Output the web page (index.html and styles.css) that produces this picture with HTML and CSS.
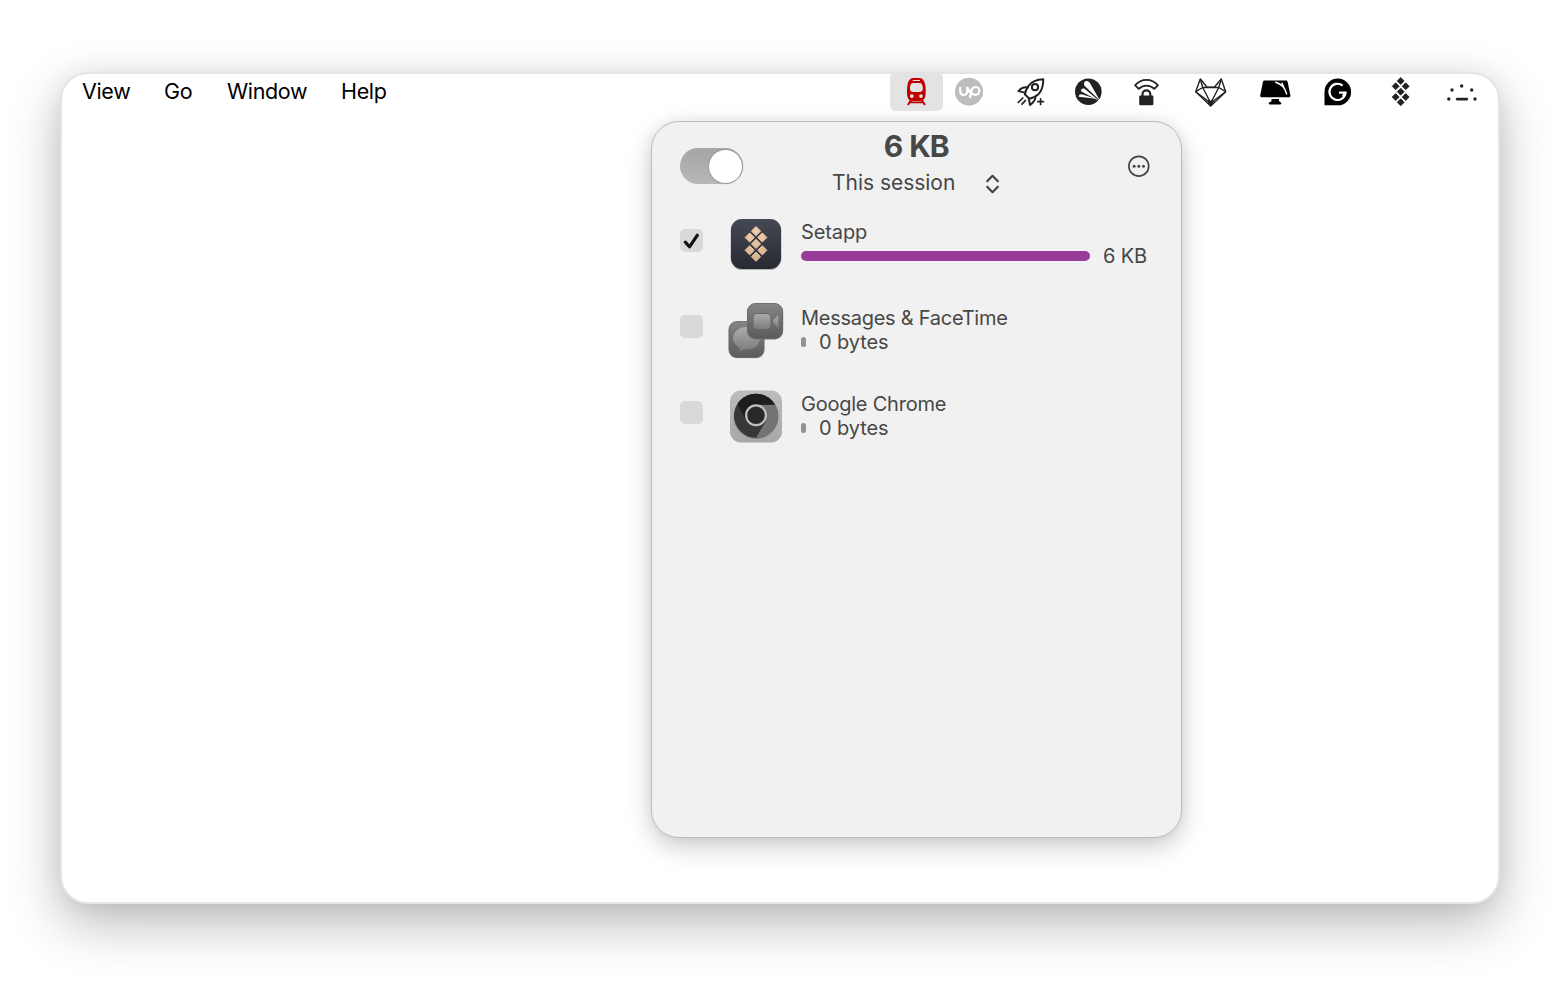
FILE: index.html
```html
<!DOCTYPE html>
<html lang="en">
<head>
<meta charset="utf-8">
<title>Menu bar</title>
<link rel="stylesheet" href="styles.css">
</head>
<body>
<main class="window">
  <header class="menubar">
    <nav class="menus">
      <span class="menu menu-view">View</span>
      <span class="menu menu-go">Go</span>
      <span class="menu menu-window">Window</span>
      <span class="menu menu-help">Help</span>
    </nav>
    <div class="tray">
      <div class="tray-active">
        <svg width="53" height="39" viewBox="0 0 53 39">
          <path fill="#c00000" fill-rule="evenodd" d="M23.500 6h5.800c3.700 0 5.400 3.200 6 7.500.5 3.200.5 6.500.2 9.500-.3 3.400-2 6-5 6h-8.300c-3 0-4.700-2.600-5-6-.3-3-.3-6.300.2-9.500.6-4.300 2.400-7.500 6.100-7.500zM22.800 7.900v1.100h7.200V7.900zM23 11c-1.900 0-2.800 2-3 4.600-.2 2.900.7 4.300 2.600 4.300h7.600c1.900 0 2.800-1.400 2.600-4.300-.2-2.600-1.100-4.600-3-4.600zM21.800 22.200a1.900 1.900 0 1 0 0 3.800 1.900 1.900 0 0 0 0-3.800zM31 22.200a1.900 1.900 0 1 0 0 3.800 1.900 1.900 0 0 0 0-3.800z"/>
          <path d="M21 28l-3.100 5M31.800 28l3.100 5M19.500 30.400h13.800" stroke="#c00000" stroke-width="1.900" fill="none"/>
        </svg>
      </div>
      <svg class="tray-up" width="28" height="40" viewBox="0 0 28 40">
        <circle cx="14" cy="19.700" r="14" fill="#bdbdbd"/>
        <path d="M5.200 15v4.500a3.500 3.500 0 0 0 7 0V15c1.200 3.300 2.600 5.500 4.300 7.100M14.900 26l1.600-7.600c.6-2.200 1.900-3.400 3.900-3.400a3.900 3.900 0 0 1 0 7.800c-2.700 0-4.700-2-6-4.100" fill="none" stroke="#fff" stroke-width="2.200"/>
      </svg>
      <svg class="tray-rocket" width="28" height="40" viewBox="0 0 28 40">
        <g fill="none" stroke="#222" stroke-width="2" stroke-linejoin="round" stroke-linecap="round">
          <path d="M26.300 7.300c-6.500.2-11.300 1.800-14.800 6.500-2 2.700-3.200 5.500-3.700 8.500l4.600 4.400c3.500-.8 6.600-2.200 9-4.500 3.700-3.600 4.900-8.400 4.900-14.900z"/>
          <circle cx="18" cy="15.200" r="3.100"/>
          <path d="M11 15.500c-3-.6-6.600.2-9.500 3.600l6.300 1.500M18.500 24.500c0 3.200-2 6-5.500 8.500l-1.200-6.500"/>
          <path d="M5.800 26L1.200 30.500M8.500 28.300l-3.500 3.800M20.800 29.700h5.600M23.600 26.900v5.600" stroke-width="1.700"/>
        </g>
      </svg>
      <svg class="tray-avast" width="27" height="40" viewBox="0 0 27 40">
        <circle cx="13.300" cy="19.700" r="13.300" fill="#222"/>
        <path fill="#fff" d="M9.300 13.600c-.9-2.500.4-4.500 2.400-4.500 1.600 0 2.600.9 3.500 2.500L25 28.700zM6 19.200c-.3-2.200 1.900-3.300 3.900-2.200l14.300 12zM3.700 24.800c0-1.900 1.300-2.700 3-2.500l14.200 4.500z"/>
        <path fill="#fff" d="M24 27l3 1-3 5-1-3z"/>
      </svg>
      <svg class="tray-lock" width="25" height="40" viewBox="0 0 25 40">
        <path d="M1 13.200c6.500-7.200 16.500-7.200 23 0l-3.700 3.700c-4.300-4.500-11.300-4.500-15.600 0z" fill="none" stroke="#222" stroke-width="1.700" stroke-linejoin="round"/>
        <path d="M8.500 24.500v-2.300a3.900 3.900 0 0 1 7.800 0v2.300" fill="none" stroke="#222" stroke-width="2.200"/>
        <rect x="5.200" y="23.600" width="14.200" height="9.600" rx="1.300" fill="#222"/>
      </svg>
      <svg class="tray-fox" width="32" height="40" viewBox="0 0 32 40">
        <g fill="none" stroke="#222" stroke-width="1.400" stroke-linejoin="round">
          <path d="M5.300 7L.7 19.700 15.700 34l15-14.300L26.300 7l-7 8.300h-7.200z"/>
          <path d="M5.300 7l2.400 8.500h16.100L26.300 7M.7 19.700l7-4.200L15.700 31l8.100-15.500 6.900 4.200M.7 19.700L15.700 31l15-11.300"/>
        </g>
        <path d="M12.500 28.500h6.400l-.5 3.300-2.700 2.700-2.700-2.700z" fill="#222"/>
      </svg>
      <svg class="tray-monitor" width="31" height="40" viewBox="0 0 31 40">
        <path d="M4.700 8.500h21.200c1 0 1.600.6 1.800 1.500l2.700 13.400c.2 1.100-.4 1.900-1.500 1.900H1.700c-1.100 0-1.700-.8-1.500-1.900L2.900 10c.2-.9.800-1.500 1.800-1.500zM11.500 27h7.500v2c0 1 2.300 1 2.300 2.300 0 .7-.3 1.200-1 1.200H9.800c-.7 0-1.100-.5-1.100-1.200 0-1.300 2.800-1.300 2.800-2.300z"/>
        <path d="M15.600 10.300c5 1.500 9.300 4.300 11 11.500M22 11.200l1.800 4.200" fill="none" stroke="#fff" stroke-width="1.500" stroke-linecap="round"/>
      </svg>
      <svg class="tray-g" width="28" height="40" viewBox="0 0 28 40">
        <path d="M13.700 6.500a13.400 13.400 0 0 1 0 26.800H.5V19.900A13.300 13.300 0 0 1 13.700 6.500z"/>
        <path d="M18.700 13.600a8.100 8.100 0 1 0 2.900 7.100h-6.600M18.800 24.300l2.800-3.600" fill="none" stroke="#fff" stroke-width="2.200"/>
      </svg>
      <svg class="tray-setapp" width="20" height="40" viewBox="0 0 20 40">
        <path fill="#222" stroke="#222" stroke-width=".8" stroke-linejoin="round" d="M9.700 5.500l3.500 3.500-3.500 3.500L6.200 9zM4.700 10.800l3.500 3.500-3.500 3.500-3.500-3.500zM14.700 10.800l3.500 3.500-3.500 3.500-3.500-3.500zM9.700 16.200l3.500 3.500-3.500 3.500-3.500-3.500zM4.700 21.500l3.500 3.500-3.500 3.500L1.200 25zM14.700 21.500l3.500 3.500-3.500 3.500-3.500-3.500zM9.700 26.800l3.500 3.500-3.500 3.500-3.500-3.500z"/>
      </svg>
      <svg class="tray-dots" width="30" height="40" viewBox="0 0 30 40">
        <g fill="#222"><circle cx="14.700" cy="14" r="1.700"/><circle cx="5" cy="18" r="1.700"/><circle cx="24.700" cy="18" r="1.700"/><circle cx="1.800" cy="27" r="1.700"/><circle cx="28" cy="27" r="1.700"/><rect x="8.800" y="25.800" width="12.400" height="2.600" rx="1.300"/></g>
      </svg>
    </div>
  </header>

  <section class="panel">
    <div class="panel-head">
      <div class="switch"><div class="knob"></div></div>
      <div class="summary">
        <div class="total">6 KB</div>
        <div class="period"><span class="period-name">This session</span>
          <svg width="15" height="20" viewBox="0 0 15 20"><path d="M2.200 7.200l5.300-5.400 5.300 5.400M2.200 12.800l5.300 5.400 5.300-5.400" fill="none" stroke="#444" stroke-width="2.200" stroke-linecap="round" stroke-linejoin="round"/></svg>
        </div>
      </div>
      <svg class="more" width="24" height="24" viewBox="0 0 24 24"><circle cx="11.800" cy="12.200" r="9.900" fill="none" stroke="#444" stroke-width="1.700"/><g fill="#444"><circle cx="7.100" cy="12.200" r="1.500"/><circle cx="11.800" cy="12.200" r="1.500"/><circle cx="16.500" cy="12.200" r="1.500"/></g></svg>
    </div>

    <div class="row">
      <div class="check"><svg width="23" height="23" viewBox="0 0 23 23"><path d="M5.300 13.100l4.200 4.700 7.900-11.600" fill="none" stroke="#111" stroke-width="3.200" stroke-linecap="round" stroke-linejoin="round"/></svg></div>
      <svg class="app" width="58" height="58" viewBox="0 0 58 58">
        <defs><linearGradient id="navy" x1="0" y1="0" x2="0" y2="1"><stop offset="0" stop-color="#444955"/><stop offset="1" stop-color="#272a30"/></linearGradient>
        <linearGradient id="peach" x1="0" y1="0" x2="0" y2="1"><stop offset="0" stop-color="#f2ceb0"/><stop offset="1" stop-color="#d9b08e"/></linearGradient></defs>
        <rect x="3.500" y="4" width="51" height="51" rx="11.500" fill="#b5b5b5"/>
        <rect x="4" y="4" width="50" height="50" rx="11" fill="url(#navy)"/>
        <path fill="url(#peach)" stroke="#e6c0a0" stroke-linejoin="round" d="M29 11.500l4.600 4.600-4.600 4.600-4.600-4.600zM22.700 17.900l4.600 4.600-4.600 4.600-4.600-4.600zM35.300 17.900l4.600 4.600-4.600 4.600-4.600-4.600zM29 24.300l4.600 4.600-4.600 4.600-4.600-4.600zM22.700 30.700l4.600 4.600-4.600 4.600-4.600-4.600zM35.300 30.700l4.600 4.600-4.600 4.600-4.600-4.600zM29 37.100l4.600 4.600-4.600 4.600-4.600-4.600z"/>
      </svg>
      <div class="info">
        <div class="name n-setapp">Setapp</div>
        <div class="usage"><div class="bar"></div><span class="amount">6 KB</span></div>
      </div>
    </div>

    <div class="row">
      <div class="check"></div>
      <svg class="app" width="58" height="58" viewBox="0 0 58 58">
        <defs><linearGradient id="tile" x1="0" y1="0" x2="0" y2="1"><stop offset="0" stop-color="#858585"/><stop offset="1" stop-color="#5b5b5b"/></linearGradient>
        <linearGradient id="glyph" x1="0" y1="0" x2="0" y2="1"><stop offset="0" stop-color="#ababab"/><stop offset="1" stop-color="#7c7c7c"/></linearGradient></defs>
        <rect x="1.500" y="20.800" width="36" height="36.500" rx="8" fill="#bdbdbd"/>
        <rect x="2" y="20.500" width="35" height="36" rx="8" fill="url(#tile)" stroke="#666" stroke-width=".8"/>
        <path d="M19.500 26c7.500 0 13.300 4.700 13.300 11.300s-5.800 11.300-13.300 11.300c-1 0-2 0-3-.3-1.200 1.100-2.800 1.700-4.900 1.900.8-.9 1.300-2 1.400-3.300-4.200-2-6.800-5.500-6.800-9.600C6.200 30.700 12 26 19.500 26z" fill="url(#glyph)"/>
        <rect x="20" y="2.400" width="36.200" height="36" rx="8.500" fill="#777"/>
        <rect x="20.500" y="2.500" width="35" height="35" rx="8" fill="url(#tile)" stroke="#666" stroke-width=".8"/>
        <rect x="26" y="12.500" width="18" height="16" rx="3.800" fill="url(#glyph)" stroke="#666" stroke-width="1"/>
        <path d="M45.500 19l5-4.800c.6-.6 1.400-.3 1.400.6v11.400c0 .9-.8 1.200-1.400.6l-5-4.800z" fill="url(#glyph)" stroke="#666" stroke-width=".6"/>
      </svg>
      <div class="info">
        <div class="name n-messages">Messages &amp; FaceTime</div>
        <div class="usage"><div class="bar-empty"></div><span class="amount-empty">0 bytes</span></div>
      </div>
    </div>

    <div class="row">
      <div class="check"></div>
      <svg class="app" width="58" height="58" viewBox="0 0 58 58">
        <defs><linearGradient id="silver" x1="0" y1="0" x2="0" y2="1"><stop offset="0" stop-color="#bcbcbc"/><stop offset="1" stop-color="#a7a7a7"/></linearGradient></defs>
        <rect x="3" y="3.500" width="52" height="52" rx="11" fill="url(#silver)"/>
        <circle cx="29" cy="29.500" r="22.500" fill="#898989"/>
        <circle cx="29" cy="28.800" r="22" fill="#363738"/>
        <path d="M29 50.800L38.700 34.500 29 17.600h19A22 22 0 0 1 29 50.800z" fill="#747474"/>
        <path d="M10.500 16.900A22 22 0 0 1 48.100 17.700H29L19.500 34z" fill="#1d1d1d"/>
        <circle cx="29" cy="28.300" r="9.900" fill="#27292b" stroke="#bfbfbf" stroke-width="2.200"/>
      </svg>
      <div class="info">
        <div class="name n-chrome">Google Chrome</div>
        <div class="usage"><div class="bar-empty"></div><span class="amount-empty">0 bytes</span></div>
      </div>
    </div>
  </section>
</main>
</body>
</html>
```
FILE: styles.css
```css
* { box-sizing: border-box; }
body {
  margin: 0;
  width: 1560px;
  height: 984px;
  overflow: hidden;
  padding: 72px 60px 80px 60px;
  background: #fff;
  font-family: Inter, "Liberation Sans", sans-serif;
}
svg { display: block; flex: none; }
.window {
  width: 1440px;
  height: 832px;
  border: 2px solid #e4e4e4;
  border-radius: 28px;
  background: #fff;
  box-shadow: 0 20px 52px rgba(0, 0, 0, .27), 0 0 24px rgba(0, 0, 0, .06);
}
.menubar {
  display: flex;
  justify-content: space-between;
  height: 40px;
  margin-top: -2px;
  padding: 0 21px 0 20px;
}
.menus { display: flex; gap: 35px; font-size: 21.5px; line-height: 38px; letter-spacing: -.35px; color: #000; }
.menu { white-space: nowrap; }
.menu-view { width: 47px; }
.menu-go { width: 28px; }
.menu-window { width: 79px; }
.menu-help { width: 46px; }
.tray { display: flex; }
.tray-active { width: 53px; height: 39px; border-radius: 6px; background: #e3e3e3; }
.tray-up { margin-left: 12px; }
.tray-rocket { margin-left: 34px; }
.tray-avast { margin-left: 30px; }
.tray-lock { margin-left: 32px; }
.tray-fox { margin-left: 36px; }
.tray-monitor { margin-left: 33px; }
.tray-g { margin-left: 33px; }
.tray-setapp { margin-left: 39px; }
.tray-dots { margin-left: 36px; }

.panel {
  width: 531px;
  height: 717px;
  margin: 9px 0 0 589px;
  padding: 0 27px;
  border: 1px solid #bcbcbc;
  border-radius: 28px;
  background: #f1f1f1;
  color: #474747;
  box-shadow: 0 9px 26px rgba(0, 0, 0, .2), 0 0 12px rgba(0, 0, 0, .06);
}
.panel-head { display: flex; height: 92px; padding-left: 1px; }
.switch {
  display: flex;
  justify-content: flex-end;
  width: 63px;
  height: 36px;
  margin-top: 26px;
  padding: 1.500px;
  border-radius: 18px;
  background: linear-gradient(#a5a5a5, #b7b7b7);
}
.knob { width: 33px; height: 33px; border-radius: 50%; background: #fff; box-shadow: 0 0 1px 1px #999; }
.summary { width: 168px; margin-left: 89px; margin-right: 127px; }
.total { height: 40px; font-size: 30px; line-height: 48px; font-weight: 700; letter-spacing: -1.2px; word-spacing: 1.500px; text-align: center; white-space: nowrap; }
.period { display: flex; justify-content: space-between; align-items: center; height: 44px; }
.period-name { font-size: 21px; line-height: 26px; padding-bottom: 2px; letter-spacing: -.03px; white-space: nowrap; }
.more { margin-top: 32px; }

.row { display: flex; height: 86px; }
.check { width: 23px; height: 23px; margin: 15px 0 0 1px; border-radius: 5px; background: #d9d9d9; }
.app { margin: 1px 0 0 24px; }
.info { margin-left: 16px; font-size: 20px; letter-spacing: -.12px; }
.name { height: 24px; margin-top: 5px; line-height: 26px; white-space: nowrap; }
.n-messages { letter-spacing: -.27px; }
.n-chrome { letter-spacing: -.23px; }
.usage { display: flex; align-items: center; height: 25px; }
.bar { width: 289px; height: 10px; border-radius: 5px; background: #973c98; }
.bar-empty { width: 5px; height: 10px; border-radius: 2.500px; background: #929292; }
.amount { margin-left: 13px; white-space: nowrap; }
.amount-empty { margin-left: 13px; white-space: nowrap; }
```
